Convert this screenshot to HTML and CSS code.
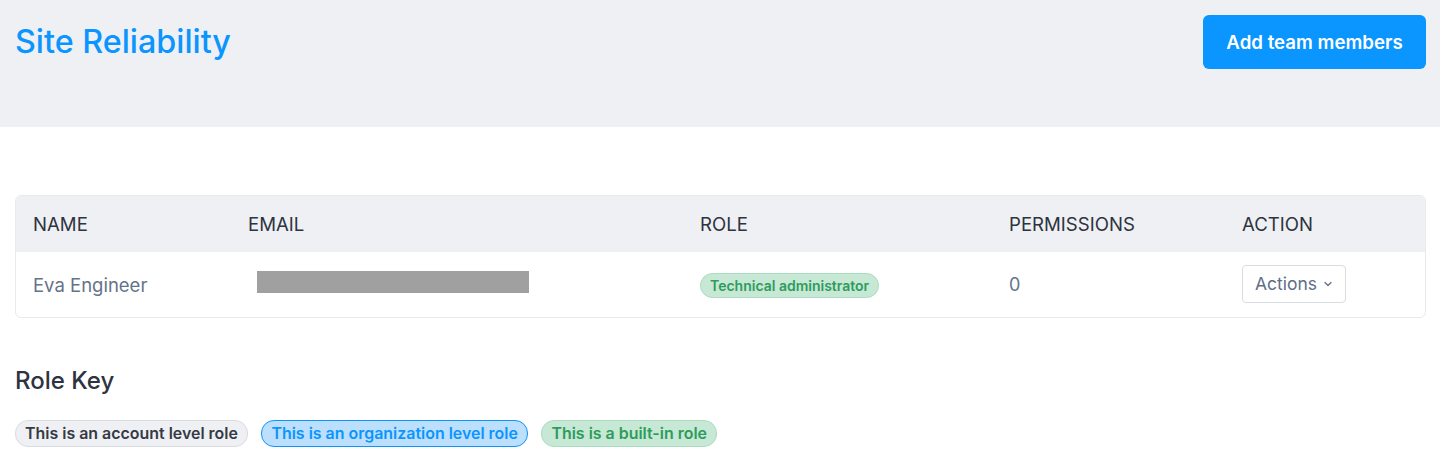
FILE: index.html
```html
<!DOCTYPE html>
<html lang="en">
<head>
    <meta charset="UTF-8">
    <meta name="viewport" content="width=device-width, initial-scale=1.0">
    <title>Site Reliability</title>
    <link rel="stylesheet" href="styles.css">
</head>
<body>
    <div class="page-header">
        <h1 class="team-title">Site Reliability</h1>
        <button class="btn-primary">Add team members</button>
    </div>

    <div class="content">
        <div class="members-table">
            <div class="row head">
                <div class="cell">NAME</div>
                <div class="cell">EMAIL</div>
                <div class="cell">ROLE</div>
                <div class="cell">PERMISSIONS</div>
                <div class="cell">ACTION</div>
            </div>
            <div class="row body">
                <div class="cell name">Eva Engineer</div>
                <div class="cell"><span class="redacted"></span></div>
                <div class="cell"><span class="badge green">Technical administrator</span></div>
                <div class="cell perms">0</div>
                <div class="cell">
                    <button class="btn-actions">Actions
                        <svg width="10" height="10" viewBox="0 0 10 10"><path d="M2 3.5 L5 6.5 L8 3.5" fill="none" stroke="#5f6e85" stroke-width="1.2" stroke-linecap="round" stroke-linejoin="round"/></svg>
                    </button>
                </div>
            </div>
        </div>

        <h2 class="key-title">Role Key</h2>
        <div class="key-list">
            <span class="badge gray">This is an account level role</span>
            <span class="badge blue">This is an organization level role</span>
            <span class="badge green">This is a built-in role</span>
        </div>
    </div>
</body>
</html>
```

FILE: styles.css
```css
* {
    margin: 0;
    padding: 0;
    box-sizing: border-box;
}

body {
    font-family: Inter, "Liberation Sans", sans-serif;
    background: #fff;
    color: #2d3340;
}

.page-header {
    background: #eff0f4;
    height: 127px;
    display: flex;
    justify-content: space-between;
    align-items: flex-start;
    padding: 15px 14px 0 15px;
}

.team-title {
    font-size: 32.3px;
    font-weight: 500;
    color: #0a95ff;
    line-height: 38px;
    margin-top: 8px;
}

.btn-primary {
    width: 223px;
    height: 54px;
    background: #0a95ff;
    color: #fff;
    border: none;
    border-radius: 6px;
    font-family: inherit;
    font-size: 18.7px;
    font-weight: 600;
}

.content {
    padding: 68px 14px 0 15px;
}

.members-table {
    border: 1px solid #e8eaee;
    border-radius: 6px;
    overflow: hidden;
}

.row {
    display: grid;
    grid-template-columns: 215px 452px 309px 233px 1fr;
    align-items: center;
}

.row.head {
    background: #eff0f4;
    height: 56px;
    font-size: 18.6px;
    color: #2d3340;
}

.row.body {
    height: 65px;
    font-size: 18px;
}

.cell {
    padding-left: 17px;
}

.name {
    color: #647388;
    font-size: 18.5px;
}

.perms {
    color: #647388;
}

.redacted {
    display: block;
    width: 272px;
    height: 22px;
    background: #a0a0a0;
    margin-left: 9px;
    margin-bottom: 6px;
}

.badge {
    display: inline-block;
    font-size: 14px;
    font-weight: 600;
    line-height: 23px;
    padding: 0 9px;
    border-radius: 13px;
    border: 1px solid;
    white-space: nowrap;
}

.badge.green {
    background: #c6e8d5;
    border-color: #a9dcc0;
    color: #2e9c5c;
}

.badge.gray {
    background: #eff0f4;
    border-color: #d8dbe0;
    color: #353a45;
}

.badge.blue {
    background: #bbdffd;
    border-color: #0a95ff;
    color: #0a95ff;
}

.body .badge {
    margin-top: 2px;
}

.btn-actions {
    height: 38px;
    width: 104px;
    margin-top: -2px;
    background: #fff;
    border: 1px solid #d9dce3;
    border-radius: 4px;
    font-family: inherit;
    font-size: 17.5px;
    color: #5f6e85;
    display: flex;
    align-items: center;
    justify-content: center;
    gap: 6px;
}

.key-title {
    font-size: 24px;
    font-weight: 500;
    color: #2d3340;
    margin-top: 48px;
    line-height: 30px;
}

.key-list {
    display: flex;
    gap: 13.5px;
    margin-top: 24px;
}

.key-list .badge {
    font-size: 15.95px;
    line-height: 25px;
}
```
